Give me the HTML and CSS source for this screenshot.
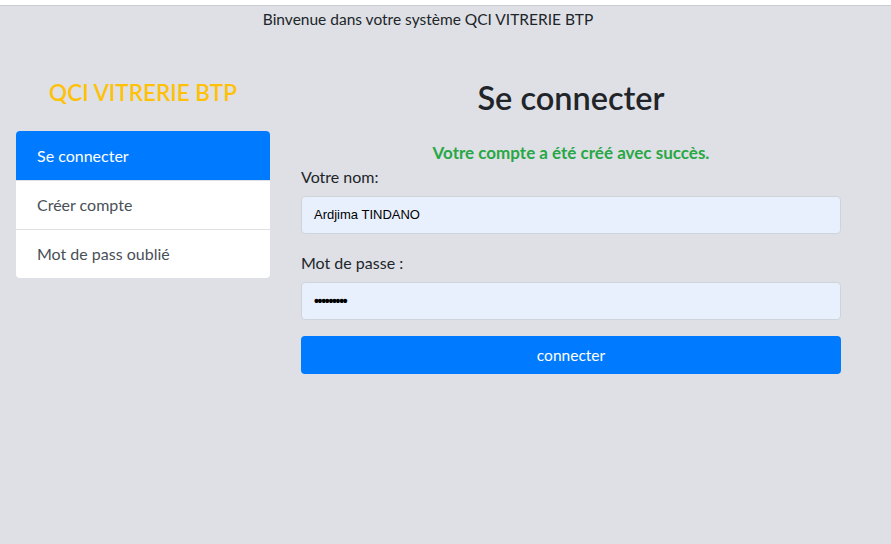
FILE: index.html
```html
<!DOCTYPE html>
<html lang="fr">
<head>
<meta charset="utf-8">
<title>QCI VITRERIE BTP</title>
<link rel="stylesheet" href="styles.css">
</head>
<body>
<div class="topstrip"></div>
<div class="page">
  <div class="welcome">Binvenue dans votre système QCI VITRERIE BTP</div>
  <div class="row">
    <aside class="side">
      <h4 class="brand">QCI VITRERIE BTP</h4>
      <ul class="list">
        <li class="item active">Se connecter</li>
        <li class="item">Créer compte</li>
        <li class="item">Mot de pass oublié</li>
      </ul>
    </aside>
    <main class="main">
      <h1 class="title">Se connecter</h1>
      <p class="success">Votre compte a été créé avec succès.</p>
      <form class="form">
        <label class="label">Votre nom:</label>
        <div class="input">Ardjima TINDANO</div>
        <label class="label label2">Mot de passe :</label>
        <div class="input pw">•••••••••</div>
        <button type="button" class="btn">connecter</button>
      </form>
    </main>
  </div>
</div>
</body>
</html>
```
FILE: styles.css
```css
html, body { margin: 0; padding: 0; }
body {
  background: #dee0e5;
  font-family: Lato, "Open Sans", sans-serif;
  color: #212529;
  height: 544px;
  overflow: hidden;
}
.topstrip {
  height: 5px;
  background: #ffffff;
  border-bottom: 1px solid #c9cbcf;
}
.page { position: relative; }
.welcome {
  width: 856px;
  text-align: center;
  font-size: 15.5px;
  font-weight: 400;
  line-height: 20px;
  padding-top: 3px;
  color: #212529;
}
.row {
  display: flex;
  padding-top: 39px;
}
.side {
  width: 254px;
  margin-left: 16px;
}
.brand {
  margin: 0;
  text-align: center;
  font-size: 22.5px;
  font-weight: 600;
  color: #ffc107;
  line-height: 26px;
  padding-top: 12px;
}
.list {
  list-style: none;
  margin: 25px 0 0 0;
  padding: 0;
  background: #fff;
  border-radius: 4px;
  overflow: hidden;
}
.item {
  height: 49px;
  line-height: 48px;
  padding-left: 21px;
  font-size: 16px;
  font-weight: 400;
  color: #495057;
  border-top: 1px solid #dfe0e1;
  box-sizing: border-box;
}
.item.active {
  background: #007bff;
  color: #fff;
  border-top: none;
  line-height: 49px;
}
.main {
  width: 540px;
  margin-left: 31px;
}
.title {
  margin: 0;
  text-align: center;
  font-size: 32.5px;
  font-weight: 600;
  line-height: 40px;
  padding-top: 10px;
}
.success {
  margin: 25px 0 0 0;
  text-align: center;
  color: #28a745;
  font-weight: 700;
  font-size: 17px;
  line-height: 20px;
}
.form { display: flex; flex-direction: column; }
.label {
  font-size: 16px;
  font-weight: 400;
  line-height: 20px;
  margin-top: 4px;
}
.label2 { margin-top: 19px; }
.input {
  margin-top: 9px;
  height: 38px;
  box-sizing: border-box;
  background: #e8f0fe;
  border: 1px solid #ced4da;
  border-radius: 4px;
  padding-left: 12px;
  line-height: 36px;
  font-family: "Liberation Sans", Arial, sans-serif;
  font-size: 13px;
  color: #000;
}
.pw { font-size: 14px; letter-spacing: -1.3px; font-weight: 700; }
.btn {
  margin-top: 16px;
  height: 38px;
  background: #007bff;
  border: none;
  border-radius: 4px;
  color: #fff;
  font-family: Lato, "Open Sans", sans-serif;
  font-size: 15.5px;
  font-weight: 400;
}
```
